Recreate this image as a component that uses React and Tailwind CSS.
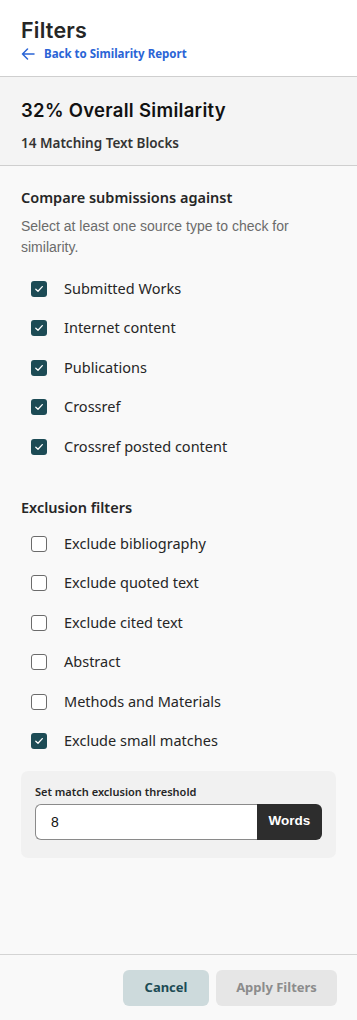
import React, { useState } from "react";

const sources = [
  { key: "submitted", label: "Submitted Works", checked: true },
  { key: "internet", label: "Internet content", checked: true },
  { key: "publications", label: "Publications", checked: true },
  { key: "crossref", label: "Crossref", checked: true },
  { key: "posted", label: "Crossref posted content", checked: true },
];

const exclusions = [
  { key: "bib", label: "Exclude bibliography", checked: false },
  { key: "quoted", label: "Exclude quoted text", checked: false },
  { key: "cited", label: "Exclude cited text", checked: false },
  { key: "abstract", label: "Abstract", checked: false },
  { key: "methods", label: "Methods and Materials", checked: false },
  { key: "small", label: "Exclude small matches", checked: true },
];

const Check = ({ label, defaultChecked }) => {
  const [on, setOn] = useState(defaultChecked);
  return (
    <label
      className="flex h-[39.5px] items-center cursor-pointer"
      onClick={() => setOn(!on)}
    >
      <span className="ml-[31px] mr-[17px] flex h-4 w-4 items-center justify-center">
        {on ? (
          <span className="flex h-4 w-4 items-center justify-center rounded-[3px] bg-[#1c4b55]">
            <svg width="10" height="10" viewBox="0 0 10 10" fill="none">
              <path
                d="M1.8 5.2 L4 7.3 L8.3 2.6"
                stroke="white"
                strokeWidth="1.3"
                strokeLinecap="round"
                strokeLinejoin="round"
              />
            </svg>
          </span>
        ) : (
          <span className="h-4 w-4 rounded-[3px] border border-[#6b6b6b] bg-white" />
        )}
      </span>
      <span className="text-[14.5px] text-[#262626]">{label}</span>
    </label>
  );
};

export default function App() {
  const [threshold, setThreshold] = useState("8");

  return (
    <div className="flex h-[1020px] w-[357px] flex-col bg-[#f9f9f9] font-['Noto_Sans',sans-serif]">
      <div className="h-[77px] border-b border-[#cfcfcf] bg-white px-[21px] pt-[16px]">
        <div className="text-[21.5px] font-semibold leading-[28px] text-[#262626] font-['Inter',sans-serif] tracking-[0.2px]">
          Filters
        </div>
        <a className="mt-[1px] flex items-center gap-[9px] text-[11.5px] font-bold text-[#2a64d6]">
          <svg width="14" height="12" viewBox="0 0 14 12" fill="none">
            <path
              d="M13 6 H1.5 M6.5 1 L1.5 6 L6.5 11"
              stroke="#2a64d6"
              strokeWidth="1.5"
              strokeLinecap="round"
              strokeLinejoin="round"
            />
          </svg>
          Back to Similarity Report
        </a>
      </div>

      <div className="h-[89px] border-b border-[#cfcfcf] bg-[#f4f4f4] px-[21px] pt-[20px]">
        <div className="text-[18.5px] font-semibold leading-[26px] text-[#111] font-['Inter',sans-serif] tracking-[0.3px]">
          32% Overall Similarity
        </div>
        <div className="mt-[10px] text-[13.5px] font-semibold text-[#333]">
          14 Matching Text Blocks
        </div>
      </div>

      <div className="flex-1 px-0 pt-[21px]">
        <div className="px-[21px] text-[14.5px] font-semibold text-[#262626]">
          Compare submissions against
        </div>
        <p className="mt-[7px] px-[21px] text-[14px] leading-[21px] text-[#6b6b6b] font-['Liberation_Sans',sans-serif]">
          Select at least one source type to check for similarity.
        </p>
        <div className="mt-[11px]">
          {sources.map((s) => (
            <Check key={s.key} label={s.label} defaultChecked={s.checked} />
          ))}
        </div>

        <div className="mt-[31px] px-[21px] text-[14.5px] font-semibold text-[#262626]">
          Exclusion filters
        </div>
        <div className="mt-[5px]">
          {exclusions.map((s) => (
            <Check key={s.key} label={s.label} defaultChecked={s.checked} />
          ))}
        </div>

        <div className="mx-[21px] mt-[10px] rounded-[7px] bg-[#f1f1f1] px-[14px] pb-[18px] pt-[13px]">
          <div className="text-[11px] font-semibold text-[#262626]">
            Set match exclusion threshold
          </div>
          <div className="mt-[3px] flex h-[36px]">
            <input
              value={threshold}
              onChange={(e) => setThreshold(e.target.value)}
              className="h-full min-w-0 flex-1 rounded-l-[6px] border border-r-0 border-[#8a8a8a] bg-white px-[15px] text-[14px] text-[#111] outline-none font-['Liberation_Sans',sans-serif]"
            />
            <div className="flex h-full w-[65px] items-center justify-center rounded-r-[6px] bg-[#2d2d2d] text-[13.5px] font-bold text-white font-['Liberation_Sans',sans-serif]">
              Words
            </div>
          </div>
        </div>
      </div>

      <div className="flex h-[66px] items-start justify-end gap-[7px] border-t border-[#d4d4d4] bg-[#f9f9f9] px-[20px] pt-[15px]">
        <button className="h-[36px] w-[86px] rounded-[6px] bg-[#cddadc] text-[13px] font-bold text-[#1c4b55]">
          Cancel
        </button>
        <button className="h-[36px] w-[121px] rounded-[6px] bg-[#e6e6e6] text-[13px] font-bold text-[#8c8c8c]">
          Apply Filters
        </button>
      </div>
    </div>
  );
}
